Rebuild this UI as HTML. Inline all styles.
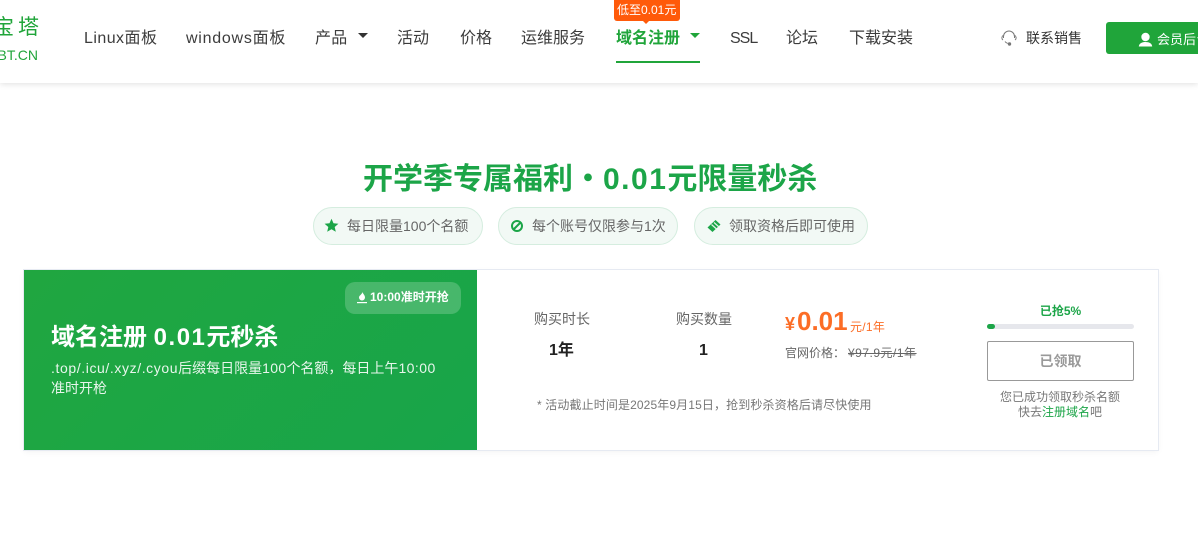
<!DOCTYPE html>
<html lang="zh-CN">
<head>
<meta charset="utf-8">
<title>开学季专属福利</title>
<style>
html,body{margin:0;padding:0;background:#fff;width:1198px;height:545px;overflow:hidden}
body{position:relative;font-family:"Liberation Sans","Noto Sans CJK SC",sans-serif;color:#333}
.a{position:absolute;white-space:nowrap;line-height:1}
.hdr{position:absolute;left:0;top:0;width:1198px;height:83px;background:#fff;box-shadow:0 1px 6px rgba(0,0,0,.13)}
.nav{font-size:16px;color:#3c3c3c;top:31px}
.tri{position:absolute;width:0;height:0;border-left:5px solid transparent;border-right:5px solid transparent;border-top:5px solid #333}
.pill{position:absolute;top:207px;height:36px;background:#f2f9f5;border:1px solid #d5eddf;border-radius:19px}
.pill span{position:absolute;top:11px;font-size:14px;line-height:1;color:#666;white-space:nowrap}
.pill svg{position:absolute}
</style>
</head>
<body>
<div class="hdr"></div>
<div class="a" style="left:-7px;top:17px;font-size:21px;color:#20a53a;letter-spacing:4px">宝塔</div>
<div class="a" style="left:-4px;top:48px;width:42px;height:16px;overflow:hidden;direction:rtl;font-size:14px;color:#20a53a">BT.CN</div>

<div class="a nav" style="left:84px;letter-spacing:.45px">Linux面板</div>
<div class="a nav" style="left:186px;letter-spacing:.75px">windows面板</div>
<div class="a nav" style="left:315px;letter-spacing:.3px">产品</div>
<div class="tri" style="left:358px;top:33px"></div>
<div class="a nav" style="left:397px">活动</div>
<div class="a nav" style="left:460px">价格</div>
<div class="a nav" style="left:521px">运维服务</div>
<div class="a nav" style="left:616px;color:#20a53a;font-weight:700">域名注册</div>
<div class="tri" style="left:690px;top:33px;border-top-color:#20a53a"></div>
<div style="position:absolute;left:616px;top:61px;width:84px;height:2px;background:#20a53a"></div>
<div style="position:absolute;left:614px;top:0;width:66px;height:21px;background:#ff5a0a;border-radius:0 0 3px 3px"></div>
<div style="position:absolute;left:643px;top:21px;width:0;height:0;border-left:3px solid transparent;border-right:3px solid transparent;border-top:3px solid #ff5a0a"></div>
<div class="a" style="left:617px;top:4px;font-size:12px;color:#fff">低至0.01元</div>
<div class="a nav" style="left:730px;letter-spacing:-1px">SSL</div>
<div class="a nav" style="left:786px">论坛</div>
<div class="a nav" style="left:849px">下载安装</div>

<svg style="position:absolute;left:1000px;top:29px" width="18" height="18" viewBox="0 0 18 18" fill="none" stroke="#777" stroke-width="1">
<path d="M3.500 9V7.500a5.500 5.500 0 0 1 11 0V9"/>
<path d="M3 6.500C1.500 7.500 1.500 10 3 11"/>
<path d="M15 6.500c1.500 1 1.500 3.500 0 4.500"/>
<path d="M5 12.500c1.200 1.500 2.500 2 4 2"/>
<circle cx="9.500" cy="15" r="1.200" fill="#777"/>
</svg>
<div class="a" style="left:1026px;top:31px;font-size:14px;color:#333">联系销售</div>

<div style="position:absolute;left:1106px;top:22px;width:110px;height:32px;background:#20a53a;border-radius:3px"></div>
<svg style="position:absolute;left:1138px;top:32px" width="15" height="15" viewBox="0 0 15 15" fill="#fff">
<circle cx="7.500" cy="5" r="4.200"/>
<path d="M.8 14.500c.3-3 2.800-4.500 6.700-4.500s6.400 1.500 6.700 4.500z"/>
</svg>
<div class="a" style="left:1157px;top:33px;font-size:13px;color:#fff">会员后台</div>

<div class="a" style="left:363px;top:165px;font-size:30px;font-weight:700;color:#1ca548">开学季专属福利・<span style="letter-spacing:1.5px">0.01</span>元限量秒杀</div>

<div class="pill" style="left:313px;width:168px">
<svg style="left:10px;top:10px" width="15" height="15" viewBox="0 0 15 15"><path fill="#1ca548" d="M7.500 .8l2 4.500 4.900.5-3.700 3.200 1.100 4.800-4.300-2.500-4.300 2.500 1.100-4.800L.6 5.800l4.900-.5z"/></svg>
<span style="left:33px">每日限量100个名额</span>
</div>
<div class="pill" style="left:498px;width:178px">
<svg style="left:11px;top:11px" width="14" height="14" viewBox="0 0 14 14" fill="none" stroke="#1ca548" stroke-width="2"><circle cx="7" cy="7" r="5"/><path d="M3.500 10.500l7-7"/></svg>
<span style="left:33px">每个账号仅限参与1次</span>
</div>
<div class="pill" style="left:694px;width:172px">
<svg style="left:11px;top:10px" width="16" height="16" viewBox="0 0 16 16"><path fill="#1ca548" d="M1.500 9.500L9.500 2l5 4.500-8 7.500z"/><path stroke="#e3f4e9" stroke-width="1.200" d="M5.500 6.500l5 4.500M8 4.500l5 4.500"/></svg>
<span style="left:34px">领取资格后即可使用</span>
</div>

<div style="position:absolute;left:24px;top:270px;width:1134px;height:180px;background:#fff;box-shadow:0 0 0 1px #e6eaf2,0 2px 6px rgba(0,0,0,.05)"></div>
<div style="position:absolute;left:24px;top:270px;width:453px;height:180px;background:linear-gradient(135deg,#20a640,#18a54a)"></div>
<div style="position:absolute;left:345px;top:282px;width:116px;height:32px;background:rgba(255,255,255,.2);border-radius:10px"></div>
<svg style="position:absolute;left:356px;top:291px" width="12" height="14" viewBox="0 0 12 14" fill="#fff"><path d="M6.500 1c.5 2 2.500 3 2.500 5.500a3 3 0 0 1-3 3 3 3 0 0 1-3-3C3 4.500 6 3.500 6.500 1z"/><rect x="1" y="11" width="10" height="1.200"/></svg>
<div class="a" style="left:370px;top:291px;font-size:12px;font-weight:700;color:#fff">10:00准时开抢</div>
<div class="a" style="left:51px;top:326px;font-size:24px;font-weight:700;color:#fff">域名注册 <span style="letter-spacing:1.5px">0.01</span>元秒杀</div>
<div class="a" style="left:51px;top:361px;font-size:14px;color:#e8f6ec"><span style="letter-spacing:.6px">.top/.icu/.xyz/.cyou</span>后缀每日限量<span style="letter-spacing:.3px">100</span>个名额，每日上午<span style="letter-spacing:.45px">10:00</span></div>
<div class="a" style="left:51px;top:381px;font-size:14px;color:#e8f6ec">准时开枪</div>

<div class="a" style="left:534px;top:312px;font-size:14px;color:#666">购买时长</div>
<div class="a" style="left:549px;top:343px;font-size:16px;font-weight:700;color:#222">1年</div>
<div class="a" style="left:676px;top:312px;font-size:14px;color:#666">购买数量</div>
<div class="a" style="left:699px;top:343px;font-size:16px;font-weight:700;color:#222">1</div>

<div class="a" style="left:785px;top:315px;font-size:18px;font-weight:700;color:#fc6d26">¥</div>
<div class="a" style="left:797px;top:308px;font-size:26px;font-weight:700;color:#fc6d26">0.01</div>
<div class="a" style="left:850px;top:321px;font-size:12px;color:#fc6d26;letter-spacing:.3px">元/1年</div>
<div class="a" style="left:785px;top:347px;font-size:12px;color:#666">官网价格：</div>
<div class="a" style="left:848px;top:347px;font-size:12px;color:#666;letter-spacing:.5px;text-decoration:line-through">¥97.9元/1年</div>
<div class="a" style="left:537px;top:399px;font-size:12px;color:#777;letter-spacing:.12px">* 活动截止时间是2025年9月15日，抢到秒杀资格后请尽快使用</div>

<div class="a" style="left:987px;top:305px;width:147px;text-align:center;font-size:12px;font-weight:700;color:#1ca548">已抢5%</div>
<div style="position:absolute;left:987px;top:324px;width:147px;height:5px;background:#e6e7ec;border-radius:3px"></div>
<div style="position:absolute;left:987px;top:324px;width:8px;height:5px;background:#1ca548;border-radius:3px"></div>
<div style="position:absolute;left:987px;top:341px;width:145px;height:38px;border:1px solid #999;border-radius:2px"></div>
<div class="a" style="left:987px;top:354px;width:147px;text-align:center;font-size:14px;font-weight:700;color:#999">已领取</div>
<div class="a" style="left:960px;top:391px;width:200px;text-align:center;font-size:12px;color:#777">您已成功领取秒杀名额</div>
<div class="a" style="left:960px;top:406px;width:200px;text-align:center;font-size:12px;color:#777">快去<span style="color:#1ca548">注册域名</span>吧</div>
</body>
</html>
